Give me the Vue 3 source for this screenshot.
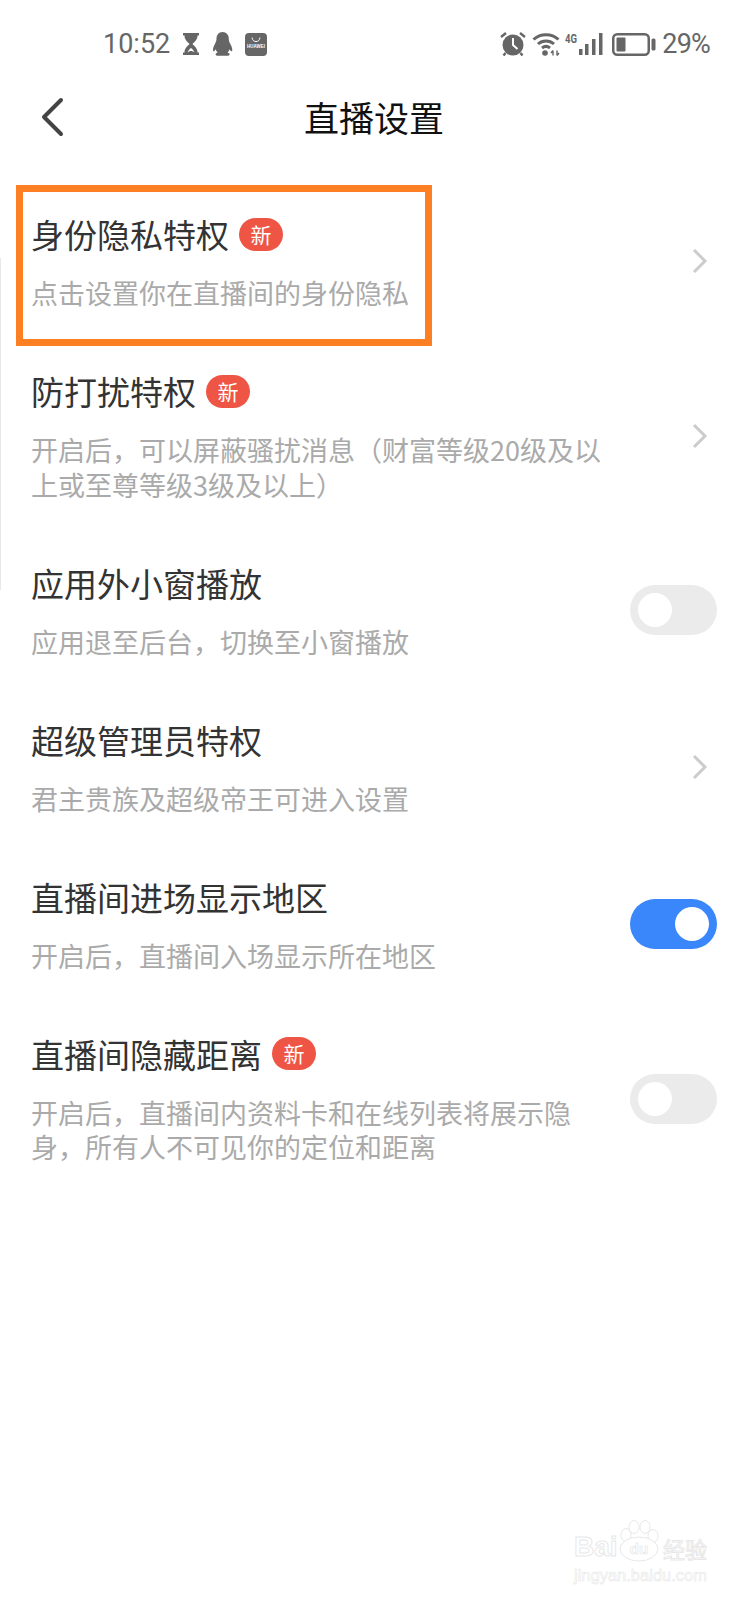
<template>
  <div class="page">
    <div class="status-bar">
      <div class="status-left">
        <span class="time">10:52</span>
        <svg class="ic-hourglass" width="18" height="22" viewBox="0 0 18 22">
          <path d="M1 0h16v2.500h-1.500c0 4-2.500 6-5 8.500 2.500 2.500 5 4.500 5 8.500H17V22H1v-2.500h1.500c0-4 2.500-6 5-8.500-2.500-2.500-5-4.500-5-8.500H1z" fill="#666" />
          <path d="M5.500 19.500c.8-2 2-3.500 3.500-4.500 1.500 1 2.700 2.500 3.500 4.500c-1-1-2.300-1.500-3.500-1.500s-2.500.5-3.500 1.500z" fill="#fff" />
        </svg>
        <svg class="ic-qq" width="21" height="24" viewBox="0 0 21 24">
          <path d="M10.500 0C6.500 0 4.500 3 4.500 6.500c0 1.500-.2 2.500-.8 3.800C2.500 12.800 1 15.500 1 17.800c0 1.500.6 1.800 1.300 1.200.5-.4 1-1.100 1.300-1.800.4 1.300 1.100 2.400 2 3.300-1.300.5-2 1.100-2 1.900 0 .8 1 1.300 3 1.300h8c2.100 0 3-.5 3-1.300 0-.8-.7-1.400-2-1.900.9-.9 1.600-2 2-3.300.3.700.8 1.400 1.300 1.800.7.600 1.400.3 1.400-1.200 0-2.300-1.600-5-2.800-7.500-.6-1.300-.7-2.300-.7-3.800C16.800 3 14.500 0 10.500 0z" fill="#666" />
        </svg>
        <svg class="ic-bag" width="22" height="23" viewBox="0 0 22 23">
          <rect width="22" height="23" rx="4" fill="#666" />
          <path d="M7 4.500c.5 3 2 4 4 4s3.500-1 4-4" fill="none" stroke="#fff" stroke-width="1" />
          <text x="11" y="14.500" text-anchor="middle" class="bag-text">HUAWEI</text>
        </svg>
      </div>
      <div class="status-right">
        <svg width="26" height="24" viewBox="0 0 26 24">
          <circle cx="13" cy="13" r="10.500" fill="#666" />
          <path d="M13 6V13l4.500 4" fill="none" stroke="#fff" stroke-width="2" />
          <path d="M1 5l5-4M25 5l-5-4" stroke="#666" stroke-width="2.400" fill="none" />
          <path d="M5.500 21L3.500 23.500M20.500 21l2 2.500" stroke="#666" stroke-width="2.400" fill="none" />
        </svg>
        <svg class="ic-wifi" width="28" height="24" viewBox="0 0 28 24">
          <path d="M1.500 7.500C8.500 1 19.500 1 26.500 7.500M6 12c4.500-4 11.500-4 16 0M10 16c2.500-2 5.500-2 8 0" fill="none" stroke="#666" stroke-width="3" />
          <circle cx="13" cy="21" r="2.800" fill="#666" />
          <path d="M21 18.500v5M19 21l2-2.500M25 18.500v5M25 23.500l2-2.500" fill="none" stroke="#666" stroke-width="1.400" />
        </svg>
        <svg class="ic-signal" width="38" height="24" viewBox="0 0 38 24">
          <text x="0" y="11" textLength="12" lengthAdjust="spacingAndGlyphs" class="net-text">4G</text>
          <rect x="14" y="17" width="3.500" height="6" fill="#666" />
          <rect x="20" y="12" width="3.500" height="11" fill="#666" />
          <rect x="27" y="7" width="3.500" height="16" fill="#666" />
          <rect x="34" y="1" width="3.500" height="22" fill="#666" />
        </svg>
        <svg class="ic-battery" width="44" height="23" viewBox="0 0 44 23">
          <rect x="1.250" y="1.250" width="35.500" height="20.500" rx="4" fill="none" stroke="#666" stroke-width="2.500" />
          <rect x="4.500" y="4.500" width="9" height="14" rx="1" fill="#666" />
          <rect x="39.500" y="5.500" width="4" height="12" rx="1.500" fill="#666" />
        </svg>
        <span class="percent">29%</span>
      </div>
    </div>

    <div class="nav-bar">
      <svg class="back" width="24" height="40" viewBox="0 0 24 40">
        <path d="M21 3L4 20l17 17" fill="none" stroke="#444" stroke-width="4" stroke-linecap="round" stroke-linejoin="round" />
      </svg>
      <h1 class="nav-title">直播设置</h1>
    </div>

    <div class="list">
      <div v-for="item in items" :key="item.title" class="row">
        <div class="row-text">
          <div class="row-title">
            <span>{{ item.title }}</span>
            <span v-if="item.isNew" class="badge">新</span>
          </div>
          <div class="row-sub">{{ item.sub }}</div>
        </div>
        <svg v-if="item.type === 'link'" class="chevron" width="18" height="26" viewBox="0 0 18 26">
          <path d="M3 2l11 11L3 24" fill="none" stroke="#ccc" stroke-width="3" />
        </svg>
        <div v-else class="toggle" :class="{ on: item.on }">
          <span class="knob"></span>
        </div>
      </div>
    </div>

    <!-- 标注和水印都是盖在页面上的 -->
    <div class="edge-line"></div>
    <div class="highlight"></div>
    <div class="watermark">
      <div class="wm-top">
        <span class="wm-bai">Bai</span>
        <svg class="wm-paw" width="44" height="42" viewBox="0 0 44 42">
          <g fill="#fff" stroke="#e8e8e8" stroke-width="1">
            <ellipse cx="8" cy="15" rx="5" ry="6.500" />
            <ellipse cx="16" cy="7" rx="5" ry="6.500" />
            <ellipse cx="27" cy="7" rx="5" ry="6.500" />
            <ellipse cx="35" cy="16" rx="5" ry="6.500" />
            <ellipse cx="21" cy="29" rx="19" ry="12" />
          </g>
          <text x="21" y="34" text-anchor="middle" class="wm-du">du</text>
        </svg>
        <span class="wm-jy">经验</span>
      </div>
      <div class="wm-url">jingyan.baidu.com</div>
    </div>
  </div>
</template>

<script setup>
const items = [
  { title: '身份隐私特权', sub: '点击设置你在直播间的身份隐私', type: 'link', isNew: true },
  { title: '防打扰特权', sub: '开启后\uFF0C可以屏蔽骚扰消息\uFF08财富等级20级及以上或至尊等级3级及以上\uFF09', type: 'link', isNew: true },
  { title: '应用外小窗播放', sub: '应用退至后台\uFF0C切换至小窗播放', type: 'toggle', on: false },
  { title: '超级管理员特权', sub: '君主贵族及超级帝王可进入设置', type: 'link' },
  { title: '直播间进场显示地区', sub: '开启后\uFF0C直播间入场显示所在地区', type: 'toggle', on: true },
  { title: '直播间隐藏距离', sub: '开启后\uFF0C直播间内资料卡和在线列表将展示隐身\uFF0C所有人不可见你的定位和距离', type: 'toggle', on: false, isNew: true }
];
</script>

<style scoped>
.page {
  position: relative;
  width: 748px;
  height: 1600px;
  overflow: hidden;
  background: #fff;
  font-family: "Noto Sans CJK SC", "Noto Sans", sans-serif;
}

.status-bar {
  height: 88px;
  display: flex;
  align-items: center;
  justify-content: space-between;
  padding: 0 38px 0 103px;
  color: #666;
  font-family: Roboto, "Noto Sans", sans-serif;
  font-size: 27px;
}

.status-left,
.status-right {
  display: flex;
  align-items: center;
}

.status-left svg {
  margin-left: 12px;
}

.status-right svg {
  margin-left: 6px;
}

.status-right .ic-signal {
  margin-left: 5px;
}

.status-right .ic-battery {
  margin-left: 9px;
}

.percent {
  margin-left: 6px;
  font-size: 27px;
  letter-spacing: -0.800px;
}

.bag-text {
  font-family: "Liberation Sans", sans-serif;
  font-size: 4.500px;
  font-weight: 700;
  fill: #fff;
}

.net-text {
  font-family: Roboto, sans-serif;
  font-size: 13px;
  font-weight: 700;
  fill: #666;
}

.nav-bar {
  position: relative;
  height: 60px;
  display: flex;
  align-items: center;
  justify-content: center;
}

.back {
  position: absolute;
  left: 40px;
  top: 9px;
}

.nav-title {
  margin: 0 0 4px;
  font-size: 35px;
  font-weight: 400;
  color: #111;
}

.list {
  padding-top: 36px;
}

.row {
  display: flex;
  align-items: center;
  justify-content: space-between;
  padding: 28px 31px 30.500px 31px;
}

.row-text {
  width: 580px;
}

.row-title {
  display: flex;
  align-items: center;
  height: 44px;
  font-size: 33px;
  line-height: 44px;
  color: #333;
}

.badge {
  width: 44px;
  height: 33px;
  margin-left: 10px;
  border-radius: 17px;
  background: #ee5544;
  color: #fff;
  font-size: 21px;
  line-height: 33px;
  text-align: center;
}

.row-sub {
  margin-top: 20px;
  font-size: 27px;
  line-height: 34.500px;
  color: #aaa;
}

.chevron {
  margin: 0 8px 0 0;
}

.toggle {
  position: relative;
  width: 87px;
  height: 50px;
  margin-top: 1px;
  border-radius: 25px;
  background: #ebebeb;
}

.toggle.on {
  background: #3a86fb;
}

.knob {
  position: absolute;
  top: 8px;
  left: 8px;
  width: 34px;
  height: 34px;
  border-radius: 50%;
  background: #fff;
}

.toggle.on .knob {
  left: 45px;
}

.edge-line {
  position: absolute;
  left: 0;
  top: 258px;
  width: 1px;
  height: 332px;
  background: #e8e8e8;
}

.highlight {
  position: absolute;
  left: 16px;
  top: 185px;
  width: 416px;
  height: 161px;
  box-sizing: border-box;
  border: 7px solid #fd7f23;
}

.watermark {
  position: absolute;
  left: 574px;
  top: 1520px;
  width: 140px;
  color: #fff;
  font-family: "Liberation Sans", sans-serif;
  -webkit-text-stroke: 1px #e8e8e8;
}

.wm-top {
  display: flex;
  align-items: flex-end;
  height: 42px;
}

.wm-bai {
  font-size: 28px;
  line-height: 30px;
  font-weight: 700;
  width: 44px;
}

.wm-paw {
  flex: none;
}

.wm-du {
  font-size: 15px;
  font-weight: 700;
  fill: #fff;
  stroke: #e8e8e8;
  stroke-width: .7px;
}

.wm-jy {
  font-family: "Noto Sans CJK SC", sans-serif;
  font-size: 22px;
  line-height: 28px;
  margin-left: 1px;
  white-space: nowrap;
}

.wm-url {
  margin-top: 3px;
  font-size: 16.500px;
  line-height: 20px;
  white-space: nowrap;
  -webkit-text-stroke: .6px #e8e8e8;
}
</style>
